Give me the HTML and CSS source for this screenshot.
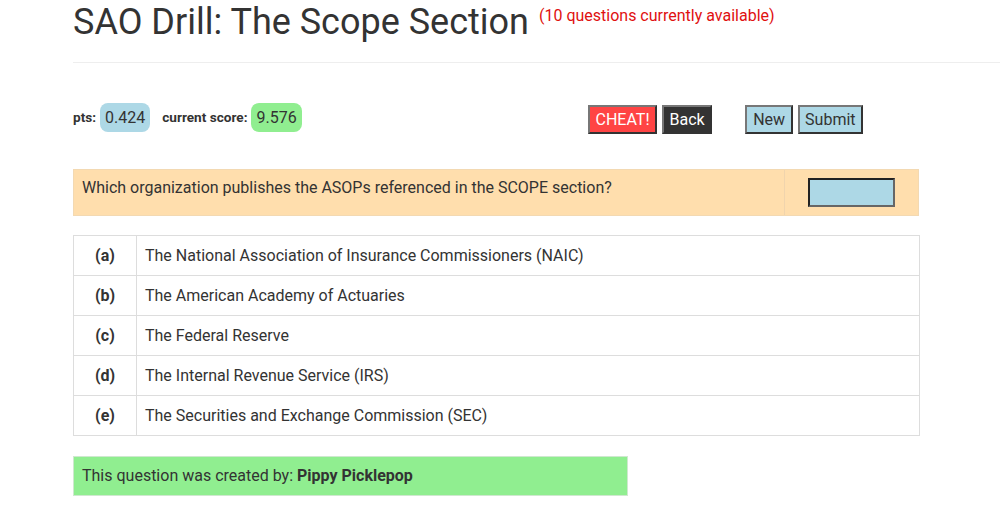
FILE: index.html
```html
<!DOCTYPE html>
<html>
<head>
<meta charset="utf-8">
<link rel="stylesheet" href="styles.css">
</head>
<body>
<div class="page">
  <header class="head">
    <h1 class="title">SAO Drill: The Scope Section</h1>
    <span class="avail">(10 questions currently available)</span>
  </header>
  <hr class="rule">
  <div class="bar">
    <div class="scores">
      <span class="lbl">pts:</span><span class="badge blue">0.424</span>
      <span class="lbl gap">current score:</span><span class="badge green">9.576</span>
    </div>
    <div class="btns">
      <button class="btn cheat">CHEAT!</button>
      <button class="btn back">Back</button>
      <button class="btn lb new">New</button>
      <button class="btn lb submit">Submit</button>
    </div>
  </div>
  <div class="question">
    <div class="qtext">Which organization publishes the ASOPs referenced in the SCOPE section?</div>
    <div class="qans"><span class="ansbox"></span></div>
  </div>
  <table class="opts">
    <tr><td class="let">(a)</td><td>The National Association of Insurance Commissioners (NAIC)</td></tr>
    <tr><td class="let">(b)</td><td>The American Academy of Actuaries</td></tr>
    <tr><td class="let">(c)</td><td>The Federal Reserve</td></tr>
    <tr><td class="let">(d)</td><td>The Internal Revenue Service (IRS)</td></tr>
    <tr><td class="let">(e)</td><td>The Securities and Exchange Commission (SEC)</td></tr>
  </table>
  <div class="credit">This question was created by: <b>Pippy Picklepop</b></div>
</div>
</body>
</html>
```
FILE: styles.css
```css
html, body { margin: 0; padding: 0; background: #fff; }
body { font-family: Roboto, "Liberation Sans", sans-serif; color: #333; overflow: hidden; }
.page { padding-left: 73px; width: 846px; }
.head { display: flex; align-items: flex-start; height: 46px; margin-top: -1px; }
.title { margin: 0; font-size: 36px; font-weight: 400; line-height: 46px; color: #333; }
.avail { color: #e01010; font-size: 16px; margin-left: 10px; margin-top: 7px; }
.rule { border: 0; border-top: 1px solid #eee; margin: 17px 0 0 0; width: 927px; }
.bar { display: flex; align-items: center; margin-top: 39px; height: 30px; }
.scores { display: flex; align-items: center; width: 515px; }
.lbl { font-size: 13.6px; font-weight: 700; color: #333; margin-right: 4px; }
.lbl.gap { margin-left: 12px; }
.badge { font-size: 16px; padding: 3px 5px; border-radius: 8px; line-height: 23px; color: #333; }
.blue { background: #add8e6; }
.green { background: #90ee90; }
.btns { display: flex; align-items: center; margin-top: 5px; }
.btn { font-family: Roboto, "Liberation Sans", sans-serif; font-size: 16px; padding: 0 5.5px; height: 29px; line-height: 25px; border: 2px solid; border-color: #777 #333 #333 #777; margin: 0 5px 0 0; cursor: pointer; }
.cheat { background: #ff4444; color: #fff; }
.back { background: #333; color: #fff; margin-right: 33px; }
.new { padding: 0 6px; }
.submit { padding: 0 5px; }
.lb { background: #add8e6; color: #333; }
.question { display: flex; background: #ffdead; border: 1px solid #f3d9b2; margin-top: 37px; height: 45px; }
.qtext { flex: 1; padding: 8px 8px; font-size: 16px; color: #333; border-right: 1px solid #f0d4ad; }
.qans { width: 133px; display: flex; justify-content: center; align-items: flex-start; padding-top: 8px; }
.ansbox { display: block; width: 83px; height: 25px; background: #add8e6; border: 2px solid; border-color: #222 #666 #666 #222; }
.opts { border-collapse: collapse; width: 847px; margin-top: 19px; font-size: 16px; }
.opts td { border: 1px solid #ddd; height: 39px; padding: 0 8px; color: #333; }
.opts td.let { width: 46px; text-align: center; font-weight: 700; }
.credit { margin-top: 20px; width: 537px; background: #90ee90; border: 1px solid #cfe8cf; padding: 9px 8px 10px; font-size: 16px; color: #333; line-height: 19px; }
.credit b { font-weight: 700; }
```
